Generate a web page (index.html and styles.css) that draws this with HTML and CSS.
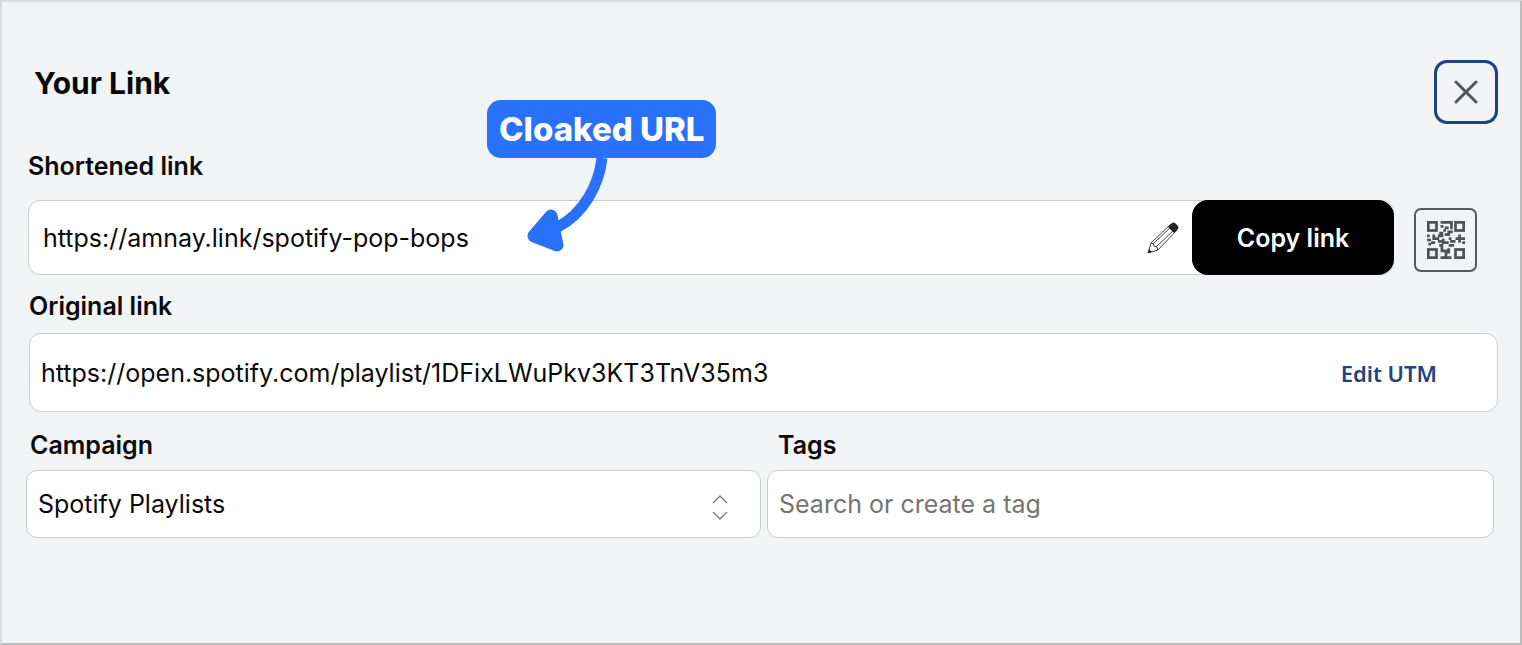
FILE: index.html
```html
<!DOCTYPE html>
<html lang="en">
<head>
    <meta charset="utf-8">
    <meta name="viewport" content="width=device-width, initial-scale=1">
    <title>Your Link</title>
    <link rel="stylesheet" href="styles.css">
</head>
<body>

    <main class="panel">
        <header class="panel-header">
            <h1>Your Link</h1>
            <button class="close" type="button" aria-label="Close">
                <svg width="24" height="24" viewBox="0 0 24 24">
                    <path d="M2 2L22 22M22 2L2 22" fill="none" stroke="#555" stroke-width="3" stroke-linecap="round"/>
                </svg>
            </button>
        </header>

        <section class="short">
            <label for="shortLink">Shortened link</label>
            <div class="short-row">
                <div class="short-box">
                    <input id="shortLink" type="text" value="https://amnay.link/spotify-pop-bops">
                    <button class="edit" type="button" aria-label="Edit link">
                        <svg width="32" height="32" viewBox="0 0 32 32">
                            <g fill="none" stroke="#444" stroke-width="1" stroke-linejoin="round">
                                <path d="M1 31L4 21L24 2L30 8L11 28Z"/>
                                <path d="M4 21Q7 21 7 24Q11 24 11 28M6 22L25 4M9 25L28 7"/>
                            </g>
                            <path d="M21 5L25 1Q26 0 28 1L31 4Q32 6 31 7L27 11Z" fill="#222"/>
                            <path d="M1 31L2 27L5 30Z" fill="#222"/>
                        </svg>
                    </button>
                    <button class="copy" type="button">Copy link</button>
                </div>
                <button class="qr" type="button" aria-label="Show QR code">
                    <svg width="38" height="38" viewBox="0 0 28 28">
                        <g fill="none" stroke="#4d5257" stroke-width="2">
                            <rect x="1" y="1" width="6" height="6"/>
                            <rect x="21" y="1" width="6" height="6"/>
                            <rect x="1" y="21" width="6" height="6"/>
                            <rect x="21" y="21" width="6" height="6"/>
                            <path d="M10 1H18V6M10 4H12M13 5H16M12 7H14M15 8H19M9 9H12M1 10V12M5 10V14M8 11H12M13 10H17M21 13H28M24 10V16M0 14H3M3 16H6M6 13H9M8 15H11M12 13V16H16M16 13H18M17 15H21M26 16H28M1 17H3M9 18H12M16 18H20M11 18V23M11 22H16M16 20V24M14 22V27M10 27H18"/>
                        </g>
                    </svg>
                </button>
            </div>

            <div class="callout">
                <span>Cloaked URL</span>
                <svg width="84" height="98" viewBox="0 0 84 98">
                    <path d="M76 0C73 27 58 55 32 69" fill="none" stroke="#2970fb" stroke-width="11"/>
                    <path d="M8 78L25 58L31 87Z" fill="#2970fb" stroke="#2970fb" stroke-width="13" stroke-linejoin="round"/>
                </svg>
            </div>
        </section>

        <section class="original">
            <label for="originalLink">Original link</label>
            <div class="original-box">
                <input id="originalLink" type="text" value="https://open.spotify.com/playlist/1DFixLWuPkv3KT3TnV35m3">
                <a href="#utm">Edit UTM</a>
            </div>
        </section>

        <section class="meta">
            <div class="campaign">
                <label for="campaign">Campaign</label>
                <div class="select-box">
                    <select id="campaign">
                        <option>Spotify Playlists</option>
                    </select>
                    <svg width="16" height="26" viewBox="0 0 16 26">
                        <path d="M1 9L8 2L15 9M1 18L8 25L15 18" fill="none" stroke="#777" stroke-width="1.3"/>
                    </svg>
                </div>
            </div>
            <div class="tags">
                <label for="tags">Tags</label>
                <input id="tags" type="text" placeholder="Search or create a tag">
            </div>
        </section>
    </main>

</body>
</html>
```
FILE: styles.css
```css
* {
    box-sizing: border-box;
}

body {
    margin: 0;
    font: 400 25px/32px "Inter", sans-serif;
    color: #0a0a0a;
    background: #f1f3f5;
}

input, select, button {
    font: inherit;
    color: inherit;
    margin: 0;
}

button {
    display: flex;
    align-items: center;
    justify-content: center;
    padding: 0;
    border: 0;
    background: none;
    cursor: pointer;
}

label {
    display: block;
    font-weight: 600;
}

.panel {
    min-height: 100vh;
    padding: 58px 22px 58px 24px;
    border: 2px solid #d9dbdd;
    border-right-color: #bdbdbd;
    border-bottom-color: #bdbdbd;
}

/* Title and close button */
.panel-header {
    display: flex;
    justify-content: space-between;
    align-items: flex-start;
    padding-left: 8px;
}

.panel-header h1 {
    margin: 0;
    font-size: 30px;
    line-height: 46px;
    font-weight: 700;
}

.close {
    width: 64px;
    height: 64px;
    border: 3px solid #1d427c;
    border-radius: 13px;
}

/* Shortened link */
.short {
    position: relative;
    margin: 26px 21px 0 2px;
}

.short-row {
    display: flex;
    align-items: center;
    gap: 20px;
    margin-top: 18px;
}

.short-box {
    flex: 1;
    display: flex;
    height: 75px;
    border: 1px solid #c9cbce;
    border-radius: 12px;
    background: #fff;
}

.short-box input {
    flex: 1;
    min-width: 0;
    padding: 0 14px;
    border: 0;
    background: none;
}

.edit {
    width: 60px;
}

.copy {
    width: 202px;
    margin: -1px;
    border-radius: 16px;
    background: #000;
    color: #fff;
    font-weight: 600;
}

.qr {
    width: 63px;
    height: 64px;
    margin-top: 4px;
    border: 2px solid #55595d;
    border-radius: 7px;
}

/* Callout lying over the short link */
.callout {
    position: absolute;
    top: -50px;
    left: 459px;
    pointer-events: none;
}

.callout span {
    display: block;
    padding: 0 12px;
    border-radius: 14px;
    background: #2970fb;
    color: #fff;
    font-size: 33px;
    font-weight: 800;
    line-height: 58px;
}

.callout svg {
    display: block;
    margin-left: 39px;
}

/* Original link */
.original {
    margin: 15px 0 0 3px;
}

.original-box {
    display: flex;
    align-items: center;
    height: 79px;
    margin-top: 11px;
    padding-right: 60px;
    border: 1px solid #c9cbce;
    border-radius: 12px;
    background: #fff;
}

.original-box input {
    flex: 1;
    min-width: 0;
    padding: 0 11px;
    border: 0;
    background: none;
}

.original-box a {
    color: #234380;
    font: 600 22px/32px "Noto Sans", sans-serif;
    text-decoration: none;
}

/* Campaign and tags */
.meta {
    display: grid;
    grid-template-columns: 735fr 727fr;
    gap: 6px;
    margin: 17px 4px 0 0;
}

.campaign label {
    padding-left: 4px;
}

.tags label {
    padding-left: 11px;
}

.select-box {
    display: flex;
    align-items: center;
    position: relative;
}

.select-box select,
.tags input {
    width: 100%;
    height: 68px;
    margin-top: 9px;
    padding: 0 11px;
    border: 1px solid #c9cbce;
    border-radius: 11px;
    background: #fff;
    appearance: none;
}

.select-box svg {
    position: absolute;
    right: 33px;
    bottom: 18px;
    pointer-events: none;
}

.tags input::placeholder {
    color: #757575;
    opacity: 1;
}
```
